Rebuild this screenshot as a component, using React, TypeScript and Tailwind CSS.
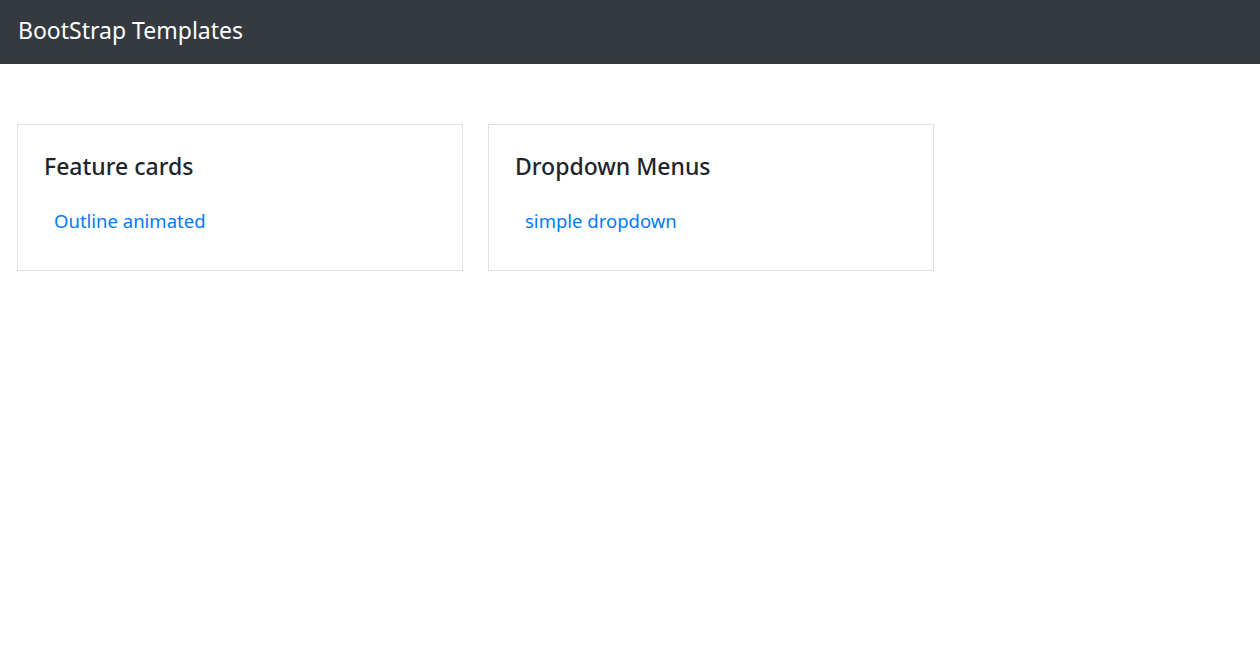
const sections = [
  { title: "Feature cards", links: ["Outline animated"] },
  { title: "Dropdown Menus", links: ["simple dropdown"] },
];

const SectionCard = ({ title, links }: { title: string; links: string[] }) => {
  return (
    <div className="h-[147px] w-[446px] border border-[#dee2e6] px-[26px] pt-[28px]">
      <h4 className="text-[23px] leading-[1.2] font-medium text-[#212529]">{title}</h4>
      <ul className="mt-[26px] pl-[10px]">
        {links.map((l) => (
          <li key={l}>
            <a href="#" className="text-[18.5px] leading-[1.5] text-[#007bff]">
              {l}
            </a>
          </li>
        ))}
      </ul>
    </div>
  );
};

export default function App() {
  return (
    <div className="min-h-screen bg-white font-['Noto_Sans',sans-serif]">
      <header className="flex h-16 items-center bg-[#343a40] px-[18px] pb-[3px]">
        <a href="#" className="text-[23px] text-white">
          BootStrap Templates
        </a>
      </header>
      <main className="flex gap-[25px] px-[17px] pt-[60px]">
        {sections.map((s) => (
          <SectionCard key={s.title} title={s.title} links={s.links} />
        ))}
      </main>
    </div>
  );
}
